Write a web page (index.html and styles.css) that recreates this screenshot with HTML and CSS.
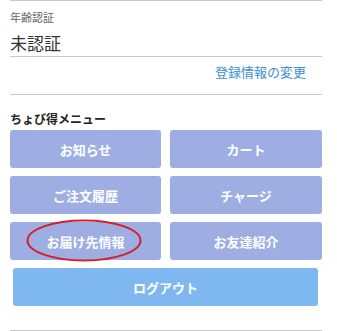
FILE: index.html
```html
<!DOCTYPE html>
<html lang="ja">
<head>
<meta charset="utf-8">
<link rel="stylesheet" href="styles.css">
</head>
<body>
<div class="page">
  <div class="rule"></div>
  <div class="field">
    <div class="label">年齢認証</div>
    <div class="value">未認証</div>
  </div>
  <div class="rule"></div>
  <div class="linkrow"><a class="link" href="#">登録情報の変更</a></div>
  <div class="rule"></div>
  <div class="menu-title">ちょび得メニュー</div>
  <div class="grid">
    <a class="btn" href="#">お知らせ</a>
    <a class="btn" href="#">カート</a>
    <a class="btn" href="#">ご注文履歴</a>
    <a class="btn" href="#">チャージ</a>
    <a class="btn marked" href="#">お届け先情報<svg class="circle" viewBox="0 0 116 43" width="116" height="43"><ellipse cx="58" cy="21.5" rx="56.5" ry="20" fill="none" stroke="#d2202c" stroke-width="2"/></svg></a>
    <a class="btn" href="#">お友達紹介</a>
  </div>
  <a class="logout" href="#">ログアウト</a>
  <div class="rule bottom"></div>
</div>
</body>
</html>
```
FILE: styles.css
```css
html, body {
  margin: 0;
  padding: 0;
  background: #ffffff;
}
body {
  font-family: "Noto Sans CJK JP", "Noto Sans", sans-serif;
  width: 337px;
  height: 331px;
  overflow: hidden;
}
.page {
  margin: 0 15px 0 10px;
  display: flex;
  flex-direction: column;
}
.rule {
  height: 1px;
  background: #c8c8c8;
}
.field {
  height: 55px;
  display: flex;
  flex-direction: column;
}
.label {
  font-size: 11px;
  line-height: 14px;
  color: #666666;
  margin-top: 9px;
}
.value {
  font-size: 17px;
  line-height: 22px;
  color: #333333;
  margin-top: 8px;
}
.linkrow {
  height: 37px;
  display: flex;
  justify-content: flex-end;
  padding-right: 16px;
}
.link {
  font-size: 13px;
  line-height: 18px;
  margin-top: 6px;
  color: #3b8fd1;
  text-decoration: none;
}
.menu-title {
  font-size: 12px;
  font-weight: 700;
  color: #222222;
  line-height: 16px;
  margin-top: 16px;
  height: 19px;
}
.grid {
  display: grid;
  grid-template-columns: 151px 152px;
  column-gap: 9px;
  row-gap: 8px;
  grid-auto-rows: 38px;
}
.btn {
  position: relative;
  display: flex;
  align-items: center;
  justify-content: center;
  background: #9eaee3;
  border-radius: 3px;
  color: #ffffff;
  font-size: 13px;
  font-weight: 700;
  text-decoration: none;
}
.circle {
  position: absolute;
  left: 16px;
  top: -3px;
}
.logout {
  margin: 8px 4px 0 3px;
  height: 38px;
  display: flex;
  align-items: center;
  justify-content: center;
  background: #7fb8f0;
  border-radius: 3px;
  color: #ffffff;
  font-size: 13px;
  font-weight: 700;
  text-decoration: none;
}
.bottom {
  margin-top: 24px;
}
```
